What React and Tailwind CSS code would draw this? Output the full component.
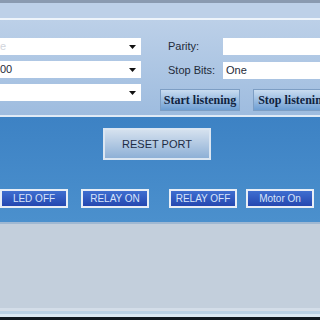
const F = { fontFamily: '"Liberation Sans", Arial, sans-serif' }
const SERIF = { fontFamily: '"Liberation Serif", "Times New Roman", serif' }

function Combo({ text, faint }) {
  return (
    <div className="flex h-[17px] w-[141px] items-center justify-between bg-white pr-[5px]">
      <span className={`text-[11px] ${faint ? 'text-gray-300' : 'text-gray-800'}`}>{text}</span>
      <svg width="7" height="4" viewBox="0 0 7 4">
        <path d="M0 0h7L3.5 4z" fill="#111" />
      </svg>
    </div>
  )
}

function Listen({ children }) {
  return (
    <div
      className="flex h-[22px] w-[80px] shrink-0 items-center justify-center overflow-hidden whitespace-nowrap border border-[#7d9ec4] bg-gradient-to-b from-[#c9dcf0] to-[#6f9fd3] text-[12px] font-bold text-[#10233f]"
      style={SERIF}
    >
      {children}
    </div>
  )
}

function Small({ children }) {
  return (
    <div className="flex h-[19px] w-[68px] shrink-0 items-center justify-center border-2 border-[#e8eef6] bg-gradient-to-b from-[#3f6ed0] to-[#2547b0] text-[10px] text-[#d7e4fa]">
      {children}
    </div>
  )
}

export default function App() {
  return (
    <div className="flex h-[320px] w-[320px] flex-col overflow-hidden bg-[#c3cfdc]" style={F}>
      <div className="h-[3px] bg-[#8a9ab0]" />
      <div className="h-[15px] bg-[#bdd0e8]" />
      <div className="h-[2px] bg-[#eef4fb]" />
      <div className="flex h-[95px] bg-gradient-to-b from-[#bcd0e8] to-[#9ebcdf] pt-[18px]">
        <div className="flex w-[160px] shrink-0 flex-col gap-[6px]">
          <Combo text="e" faint />
          <Combo text="00" />
          <Combo text="" />
        </div>
        <div className="flex min-w-0 flex-1 flex-col">
          <div className="flex items-center">
            <span className="w-[63px] shrink-0 pl-[8px] text-[11px] text-[#1f2b3a]">Parity:</span>
            <div className="h-[17px] flex-1 bg-white" />
          </div>
          <div className="mt-[7px] flex items-center">
            <span className="w-[63px] shrink-0 pl-[8px] text-[11px] text-[#1f2b3a]">Stop Bits:</span>
            <div className="flex h-[17px] flex-1 items-center bg-white pl-[3px] text-[11px] text-gray-800">One</div>
          </div>
          <div className="mt-[10px] flex gap-[13px]">
            <Listen>Start listening</Listen>
            <Listen>Stop listening</Listen>
          </div>
        </div>
      </div>
      <div className="h-[2px] bg-[#dfeaf6]" />
      <div className="flex h-[105px] flex-col bg-gradient-to-b from-[#3d82c4] to-[#4b90cd]">
        <div className="mt-[11px] flex justify-center pr-[6px]">
          <div className="flex h-[32px] w-[108px] items-center justify-center border-2 border-[#dbe6f2] bg-gradient-to-b from-[#d5e1ee] to-[#8eb0d6] text-[11px] text-[#1d2c44]">
            RESET PORT
          </div>
        </div>
        <div className="mt-[29px] flex items-center">
          <div className="w-[81px] shrink-0"><Small>LED OFF</Small></div>
          <div className="w-[88px] shrink-0"><Small>RELAY ON</Small></div>
          <div className="w-[77px] shrink-0"><Small>RELAY OFF</Small></div>
          <Small>Motor On</Small>
        </div>
      </div>
      <div className="h-[2px] bg-[#9fb8d2]" />
      <div className="h-[84px] bg-[#c3cfdc]" />
      <div className="h-[3px] bg-[#d3dde8]" />
      <div className="h-[3px] bg-[#b9d2e6]" />
      <div className="h-[3px] bg-[#d9e9f4]" />
      <div className="flex-1 bg-[#0f1a22]" />
    </div>
  )
}
